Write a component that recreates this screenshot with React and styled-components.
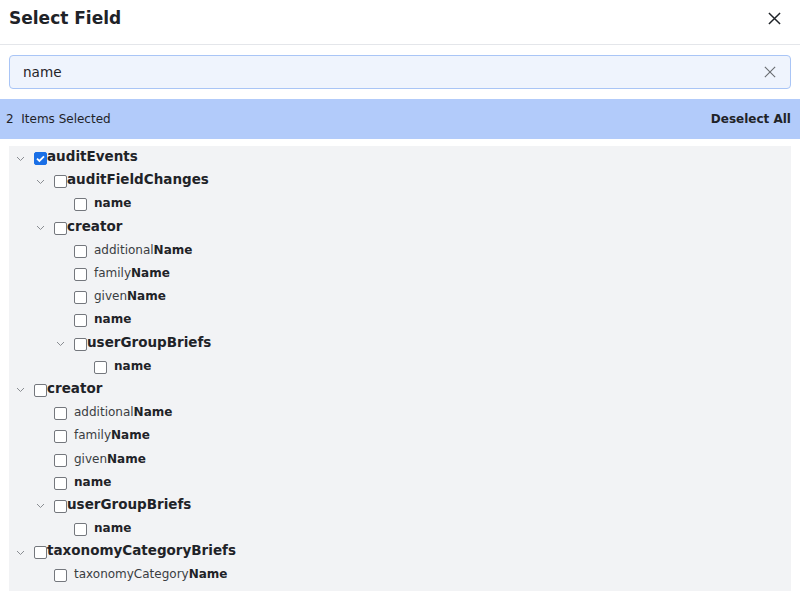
import styled, { createGlobalStyle } from "styled-components";

const GlobalStyle = createGlobalStyle`
  body {
    margin: 0;
    background: #ffffff;
    font-family: "DejaVu Sans", sans-serif;
    color: #1f2328;
  }
`;

const Dialog = styled.div`
  width: 800px;
  height: 598px;
  display: flex;
  flex-direction: column;
  overflow: hidden;
`;

const Header = styled.div`
  height: 45px;
  display: flex;
  align-items: center;
  justify-content: space-between;
  padding: 0 19px 8px 9px;
  border-bottom: 1px solid #e4e6ea;
  box-sizing: border-box;
`;

const Title = styled.h1`
  margin: 0;
  font-size: 17px;
  font-weight: bold;
  color: #1f2328;
`;

const IconButton = styled.button`
  border: none;
  background: none;
  padding: 0;
  display: flex;
  align-items: center;
  justify-content: center;
  cursor: pointer;
  color: ${(p) => p.$color || "#1f2328"};
`;

const SearchBox = styled.div`
  margin: 10px 9px 0;
  height: 34px;
  box-sizing: border-box;
  border: 1px solid #a9c5f6;
  border-radius: 4px;
  background: #eff4fd;
  display: flex;
  align-items: center;
  padding: 0 14px 0 13px;
`;

const SearchInput = styled.input`
  flex: 1;
  border: none;
  background: transparent;
  outline: none;
  font-family: "DejaVu Sans", sans-serif;
  font-size: 13.6px;
  color: #1f2328;
  padding: 0;
`;

const SelectedBar = styled.div`
  margin-top: 10px;
  height: 40px;
  background: #b2cbfa;
  display: flex;
  align-items: center;
  justify-content: space-between;
  padding: 0 9px 0 6px;
  font-size: 12px;
  color: #1f2328;
`;

const Count = styled.span`
  white-space: pre;
`;

const Deselect = styled.button`
  border: none;
  background: none;
  padding: 0;
  font-family: "DejaVu Sans", sans-serif;
  font-size: 12px;
  font-weight: bold;
  color: #1f2328;
  cursor: pointer;
`;

const Tree = styled.div`
  margin: 7px 9px 0;
  background: #f2f3f5;
  padding-bottom: 4px;
`;

const Row = styled.div`
  height: 23.2px;
  display: flex;
  align-items: center;
  padding-left: ${(p) => p.$level * 20}px;
`;

const Toggle = styled.span`
  width: 22px;
  display: flex;
  justify-content: center;
  margin-top: 2px;
  color: #8a8d92;
`;

const Spacer = styled.span`
  width: 25px;
`;

const Check = styled.input`
  appearance: none;
  flex: none;
  width: 13px;
  height: 13px;
  box-sizing: border-box;
  margin: 2px 0 0 ${(p) => (p.$leaf ? 0 : 3)}px;
  border: 1px solid #74777d;
  border-radius: 2px;
  background: #ffffff;
  &:checked {
    border-color: #1a6fe6;
    background: #1a6fe6
      url("data:image/svg+xml,%3Csvg xmlns='http://www.w3.org/2000/svg' viewBox='0 0 13 13'%3E%3Cpath d='M3 6.6l2.4 2.3L10 4.3' fill='none' stroke='white' stroke-width='1.8'/%3E%3C/svg%3E")
      center / 13px 13px no-repeat;
  }
`;

const GroupLabel = styled.span`
  padding-bottom: 3px;
  font-size: 13.5px;
  font-weight: bold;
  color: #1f2328;
`;

const LeafLabel = styled.span`
  margin-left: 7px;
  padding-bottom: 1px;
  font-size: 12px;
  color: #3a3d42;
  b {
    color: #1f2328;
  }
`;

const Chevron = () => (
  <svg width="9" height="6" viewBox="0 0 9 6">
    <path d="M1 1l3.5 3.5L8 1" fill="none" stroke="currentColor" strokeWidth="1" />
  </svg>
);

const Cross = ({ size, width }) => (
  <svg width={size} height={size} viewBox="0 0 14 14">
    <path d="M1 1l12 12M13 1L1 13" stroke="currentColor" strokeWidth={width} fill="none" />
  </svg>
);

const tree = [
  { name: "auditEvents", level: 0, checked: true },
  { name: "auditFieldChanges", level: 1 },
  { leaf: "", bold: "name", level: 2 },
  { name: "creator", level: 1 },
  { leaf: "additional", bold: "Name", level: 2 },
  { leaf: "family", bold: "Name", level: 2 },
  { leaf: "given", bold: "Name", level: 2 },
  { leaf: "", bold: "name", level: 2 },
  { name: "userGroupBriefs", level: 2 },
  { leaf: "", bold: "name", level: 3 },
  { name: "creator", level: 0 },
  { leaf: "additional", bold: "Name", level: 1 },
  { leaf: "family", bold: "Name", level: 1 },
  { leaf: "given", bold: "Name", level: 1 },
  { leaf: "", bold: "name", level: 1 },
  { name: "userGroupBriefs", level: 1 },
  { leaf: "", bold: "name", level: 2 },
  { name: "taxonomyCategoryBriefs", level: 0 },
  { leaf: "taxonomyCategory", bold: "Name", level: 1 },
];

export default function App() {
  return (
    <Dialog>
      <GlobalStyle />
      <Header>
        <Title>Select Field</Title>
        <IconButton aria-label="Close">
          <Cross size={13} width={1.6} />
        </IconButton>
      </Header>
      <SearchBox>
        <SearchInput defaultValue="name" />
        <IconButton aria-label="Clear" $color="#6b6e73">
          <Cross size={12} width={1.3} />
        </IconButton>
      </SearchBox>
      <SelectedBar>
        <Count>{"2  Items Selected"}</Count>
        <Deselect>Deselect All</Deselect>
      </SelectedBar>
      <Tree>
        {tree.map((item, i) =>
          item.name ? (
            <Row key={i} $level={item.level}>
              <Toggle>
                <Chevron />
              </Toggle>
              <Check type="checkbox" defaultChecked={!!item.checked} />
              <GroupLabel>{item.name}</GroupLabel>
            </Row>
          ) : (
            <Row key={i} $level={item.level}>
              <Spacer />
              <Check type="checkbox" $leaf />
              <LeafLabel>
                {item.leaf}
                <b>{item.bold}</b>
              </LeafLabel>
            </Row>
          )
        )}
      </Tree>
    </Dialog>
  );
}
